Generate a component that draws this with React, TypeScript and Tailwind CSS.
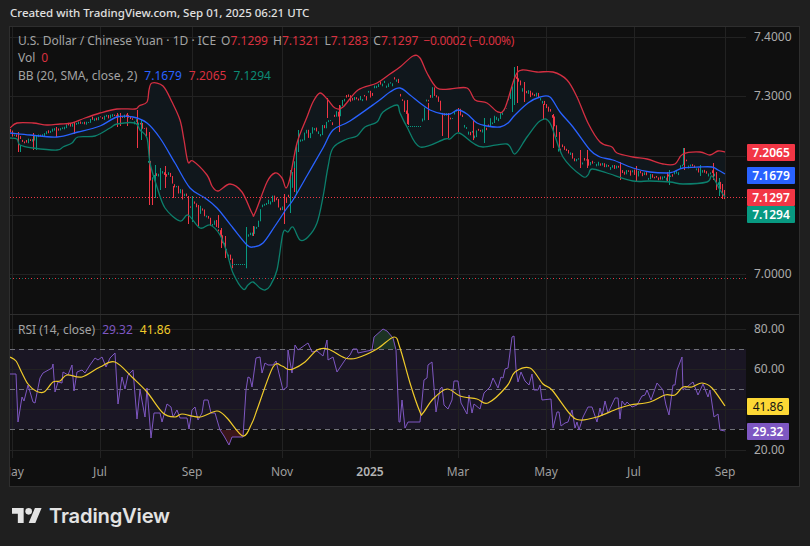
const UPPER = "10,128 17,123 33,123 47,125 60,124 72,123 85,118 100,113 117,109 135,109 139,106 147,102 149,90 152,83 163,86 172,102 180,120 184,140 188,162 193,161 207,175 212,186 218,191 230,184 242,192 252,213 255,213 267,182 275,173 282,178 286,188 290,178 297,143 307,117 313,102 320,93 328,100 335,108 343,107 358,90 377,83 390,74 400,67 413,56 420,58 427,73 437,88 450,89 467,88 475,100 487,103 498,112 505,108 515,77 522,70 537,72 553,72 567,80 577,97 588,123 600,142 612,147 617,153 633,157 647,159 663,164 675,164 683,154 700,152 710,155 718,151 725,152";
const MIDDLE = "10,133 30,135 57,137 78,132 100,126 117,117 133,117 147,123 160,138 175,163 190,188 205,198 217,208 233,228 247,245 253,247 263,243 275,226 287,208 293,200 308,174 323,148 333,130 350,121 377,102 390,92 400,88 410,95 420,103 430,110 443,114 450,114 458,110 467,114 477,123 487,126 500,127 508,123 515,115 528,103 540,97 550,97 560,112 573,127 590,150 600,157 613,160 633,168 650,172 667,173 673,172 683,168 700,167 712,167 718,170 725,174";
const LOWER = "10,138 17,139 20,145 33,148 57,150 63,147 72,143 78,137 95,136 110,128 117,124 135,123 140,130 147,138 150,163 157,187 165,208 180,221 188,215 200,228 210,225 220,235 227,253 233,273 243,289 248,285 253,282 260,288 265,290 270,286 277,270 283,233 288,232 293,227 300,240 308,237 317,223 323,197 328,167 333,148 347,139 357,136 365,127 377,122 383,112 397,105 400,113 407,127 420,147 445,139 450,139 459,133 473,143 483,147 507,144 515,154 527,137 540,121 550,123 563,157 582,176 588,175 592,169 607,173 633,181 650,181 670,182 683,184 707,182 712,176 720,190 725,197";
const RSI = "10,374 16,374 18,422 22,397 24,401 28,385 33,402 35,403 40,378 43,373 52,368 53,364 55,392 58,382 62,383 63,372 68,375 72,365 74,391 77,372 82,370 85,373 90,365 95,358 98,360 102,357 106,367 110,358 115,353 118,404 122,377 125,389 128,375 130,373 133,370 137,419 140,390 145,417 147,388 151,438 154,413 160,413 162,422 167,404 171,407 173,417 177,410 180,418 187,418 189,429 192,410 195,407 198,420 202,413 204,400 208,400 211,413 215,413 220,430 224,436 229,445 232,437 243,437 246,390 248,377 250,378 252,387 256,358 260,357 262,373 265,363 268,365 273,365 276,361 283,390 287,387 288,350 292,373 295,345 298,350 308,343 312,352 317,351 323,356 327,340 328,360 333,357 337,372 345,360 350,355 353,349 357,349 358,353 372,350 374,337 383,329 387,331 393,338 396,350 399,422 400,422 402,400 405,428 408,422 420,422 423,390 424,380 427,378 428,365 432,362 436,412 440,389 442,387 444,405 448,409 452,400 454,381 458,381 461,403 467,414 469,395 472,413 474,404 480,409 484,393 490,387 493,378 498,388 501,377 503,378 505,369 508,368 512,337 514,336 516,369 518,382 521,372 525,381 529,385 532,374 534,390 538,390 540,385 542,400 551,399 553,428 557,412 559,412 561,426 565,423 568,422 572,410 575,428 577,422 579,430 583,417 588,407 592,407 597,422 600,408 602,416 605,401 608,413 615,398 618,398 620,419 622,401 625,405 627,402 632,407 637,405 642,396 645,395 647,390 651,400 657,383 663,390 666,405 669,415 673,385 675,385 677,370 682,357 683,390 693,382 698,395 703,384 708,397 710,390 714,417 718,414 720,430 725,431";
const RSI_MA = "10,357 16,361 22,373 28,384 36,391 44,392 53,382 60,381 67,375 82,377 100,367 115,362 133,378 147,392 163,413 175,417 182,414 200,417 217,411 227,418 243,436 252,423 258,407 273,367 282,366 287,369 293,369 305,362 317,350 328,349 345,358 357,358 377,349 394,337 400,348 410,383 420,412 423,413 433,399 447,389 460,396 477,399 488,403 507,386 515,372 530,368 543,384 552,390 570,414 580,420 597,417 617,409 630,405 650,402 665,395 675,395 683,387 692,387 702,383 712,388 725,406";

// rough close path the bars follow
const CLOSES: [number, number][] = [[10,133],[18,138],[24,142],[35,137],[50,131],[60,128],[80,123],[100,118],[117,115],[128,118],[138,122],[146,135],[150,178],[156,172],[166,172],[174,188],[182,197],[192,206],[202,212],[214,224],[222,240],[228,258],[232,266],[245,264],[248,232],[256,226],[262,206],[272,198],[280,205],[287,200],[292,170],[297,140],[305,133],[320,130],[332,122],[342,104],[352,98],[366,97],[380,84],[395,78],[402,100],[408,125],[421,126],[426,100],[432,92],[440,105],[448,122],[458,112],[466,128],[476,133],[486,128],[496,118],[506,112],[511,88],[516,74],[524,90],[532,92],[540,98],[548,108],[553,122],[558,150],[566,152],[574,158],[584,162],[596,163],[610,166],[625,172],[640,174],[655,178],[668,176],[678,172],[684,160],[692,168],[702,173],[712,172],[717,182],[721,192],[725,198]];

const WICKS: [number, number, number, string][] = [
  [18,132,152,"#f23645"],[20,145,152,"#089981"],[33,133,150,"#f23645"],[36,136,150,"#089981"],[56,127,137,"#f23645"],[74,122,134,"#f23645"],
  [117,113,127,"#f23645"],[120,113,126,"#f23645"],[127,113,126,"#f23645"],[137,110,148,"#f23645"],[141,120,140,"#089981"],[149,132,205,"#f23645"],[152,180,205,"#f23645"],
  [155,165,198,"#089981"],[160,168,190,"#089981"],[165,166,188,"#f23645"],[173,186,198,"#f23645"],[188,196,224,"#f23645"],[192,196,222,"#089981"],[198,205,226,"#f23645"],
  [218,215,228,"#f23645"],[221,228,248,"#f23645"],[225,236,258,"#f23645"],[246,227,264,"#089981"],[253,226,236,"#f23645"],[284,194,224,"#f23645"],[290,170,213,"#089981"],
  [294,168,192,"#f23645"],[296,148,195,"#089981"],[298,130,152,"#089981"],[327,98,118,"#f23645"],[339,105,132,"#f23645"],[407,100,124,"#f23645"],[428,103,120,"#f23645"],
  [442,115,136,"#f23645"],[448,113,138,"#f23645"],[458,108,132,"#f23645"],[473,120,140,"#f23645"],[484,118,143,"#089981"],[514,67,105,"#089981"],[517,66,103,"#f23645"],
  [512,88,112,"#089981"],[524,82,102,"#f23645"],[543,104,120,"#f23645"],[553,114,148,"#f23645"],[559,132,150,"#f23645"],[580,150,168,"#f23645"],[587,150,168,"#f23645"],
  [620,162,180,"#f23645"],[636,166,181,"#f23645"],[669,170,185,"#089981"],[667,172,181,"#f23645"],[683,148,165,"#089981"],[684,148,170,"#f23645"],[700,165,176,"#089981"],
  [713,163,180,"#f23645"],[716,172,190,"#f23645"],[719,178,196,"#089981"],[722,184,199,"#f23645"],[724,190,199,"#f23645"],
];

function pathY(x: number) {
  for (let i = 1; i < CLOSES.length; i++) {
    const [x1, y1] = CLOSES[i];
    if (x <= x1) {
      const [x0, y0] = CLOSES[i - 1];
      return y0 + ((y1 - y0) * (x - x0)) / (x1 - x0);
    }
  }
  return 198;
}

// same bars on every load
function makeBars() {
  let seed = 41;
  const rnd = () => {
    seed = (seed * 16807) % 2147483647;
    return seed / 2147483647;
  };
  const bars: { x: number; o: number; c: number; hi: number; lo: number }[] = [];
  let prev = 133;
  for (let x = 10; x <= 724; x += 2) {
    if ((x > 232 && x < 245) || (x > 408 && x < 421)) continue;
    const amp = x < 140 ? 1.6 : x > 575 ? 2.6 : 5;
    const c = pathY(x) + (rnd() - 0.5) * amp * 2;
    // some days barely move, so they draw as short ticks
    const o = rnd() < 0.4 ? c + (rnd() < 0.6 ? 1.5 : -1.5) : prev;
    bars.push({ x, o, c, hi: Math.min(o, c) - rnd(), lo: Math.max(o, c) + rnd() });
    prev = c;
  }
  return bars;
}

function parsePoints(s: string) {
  return s.split(" ").map((p) => p.split(",").map(Number));
}

// catmull-rom through the points
function smooth(pts: number[][], move = true) {
  let d = (move ? "M" : "L") + pts[0][0] + " " + pts[0][1];
  for (let i = 0; i < pts.length - 1; i++) {
    const p0 = pts[i - 1] || pts[i];
    const p1 = pts[i];
    const p2 = pts[i + 1];
    const p3 = pts[i + 2] || p2;
    const c1x = p1[0] + (p2[0] - p0[0]) / 6;
    const c1y = p1[1] + (p2[1] - p0[1]) / 6;
    const c2x = p2[0] - (p3[0] - p1[0]) / 6;
    const c2y = p2[1] - (p3[1] - p1[1]) / 6;
    d += ` C${c1x.toFixed(1)} ${c1y.toFixed(1)} ${c2x.toFixed(1)} ${c2y.toFixed(1)} ${p2[0]} ${p2[1]}`;
  }
  return d;
}

const BARS = makeBars();
const UPPER_D = smooth(parsePoints(UPPER));
const LOWER_D = smooth(parsePoints(LOWER));
const MIDDLE_D = smooth(parsePoints(MIDDLE));
const MA_D = smooth(parsePoints(RSI_MA));
const BAND_D = UPPER_D + " " + smooth(parsePoints(LOWER).reverse(), false) + " Z";

const MAIN_GRID_Y = [37.5, 96.5, 156.5, 215.5, 274.5];
const RSI_GRID_Y = [329.5, 369.5, 409.5, 450.5];
const GRID_X = [12.5, 100.5, 192.5, 282.5, 370.5, 458.5, 546.5, 634.5, 725.5];

function GridLines({ ys, top, bottom }: { ys: number[]; top: number; bottom: number }) {
  return (
    <g stroke="#222222" strokeWidth="1">
      {ys.map((y) => (
        <line key={y} x1="10" x2="746" y1={y} y2={y} />
      ))}
      {GRID_X.map((x) => (
        <line key={x} x1={x} x2={x} y1={top} y2={bottom} />
      ))}
    </g>
  );
}

function MainChart() {
  return (
    <svg className="block w-[736px] h-[287px]" viewBox="10 27 736 287">
      <GridLines ys={MAIN_GRID_Y} top={27} bottom={314} />
      <path d={BAND_D} fill="#10171c" />
      <g stroke="#222222" strokeWidth="1" opacity="0.5">
        <line x1="10" x2="746" y1="156.5" y2="156.5" />
        <line x1="10" x2="746" y1="215.5" y2="215.5" />
      </g>
      <line x1="10" x2="746" y1="197.5" y2="197.5" stroke="#f23645" strokeDasharray="1 2" />
      <line x1="10" x2="746" y1="278.5" y2="278.5" stroke="#089981" strokeDasharray="1 5" opacity="0.7" />
      <line x1="13" x2="746" y1="278.5" y2="278.5" stroke="#f23645" strokeDasharray="1 5" />
      {BARS.map((b) => (
        <line key={b.x} x1={b.x + 0.5} x2={b.x + 0.5} y1={b.hi} y2={b.lo} stroke={b.c < b.o ? "#089981" : "#f23645"} />
      ))}
      {WICKS.map(([x, y1, y2, color], i) => (
        <line key={i} x1={x + 0.5} x2={x + 0.5} y1={y1} y2={y2} stroke={color} />
      ))}
      <line x1="232" x2="245" y1="264.5" y2="264.5" stroke="#089981" strokeDasharray="1 1" />
      <line x1="408" x2="421" y1="126.5" y2="126.5" stroke="#089981" strokeDasharray="1 1" />
      <g fill="none" strokeWidth="1.3" strokeLinejoin="round">
        <path d={UPPER_D} stroke="#d42f42" />
        <path d={LOWER_D} stroke="#0c7f6c" />
        <path d={MIDDLE_D} stroke="#2962ff" />
      </g>
    </svg>
  );
}

function RsiChart() {
  return (
    <svg className="block w-[736px] h-[143px]" viewBox="10 315 736 143">
      <rect x="10" y="349" width="736" height="80" fill="#1a1624" />
      <GridLines ys={RSI_GRID_Y} top={315} bottom={458} />
      <polygon points="374,349 374,337 383,329 387,331 393,338 396,349" fill="#1c3324" />
      <polygon points="220,430 224,436 229,445 232,437 243,437 243,430" fill="#3a1519" />
      <g stroke="#6f7078" strokeDasharray="5 4">
        <line x1="10" x2="746" y1="349.5" y2="349.5" />
        <line x1="10" x2="746" y1="389.5" y2="389.5" />
        <line x1="10" x2="746" y1="429.5" y2="429.5" />
      </g>
      <polyline points={RSI} fill="none" stroke="#7e57c2" strokeWidth="1" strokeLinejoin="round" />
      <path d={MA_D} fill="none" stroke="#f0cb2a" strokeWidth="1.2" strokeLinejoin="round" />
    </svg>
  );
}

function PriceTag({ className, text }: { className: string; text: string }) {
  return (
    <div className={"absolute left-[1px] h-[17px] flex items-center justify-center rounded-[1px] text-white text-[12px] font-semibold " + className}>
      {text}
    </div>
  );
}

function Tick({ className, text }: { className: string; text: string }) {
  return <div className={"absolute left-[8px] leading-[14px] text-[#ababab] text-[12px] " + className}>{text}</div>;
}

function TimeLabel({ className, text, bold }: { className: string; text: string; bold?: boolean }) {
  return (
    <div className={"absolute top-[6px] -translate-x-1/2 leading-[16px] text-[12px] " + (bold ? "font-semibold text-[#b4b4b4] " : "text-[#9e9e9e] ") + className}>
      {text}
    </div>
  );
}

export default function App() {
  return (
    <div className="w-[810px] h-[546px] flex flex-col overflow-hidden bg-[#1f1f1f] font-['Noto_Sans',sans-serif]">
      <div className="h-[26px] pl-[10px] flex items-center text-[11.5px] font-medium text-[#e0e0e0]">
        Created with TradingView.com, Sep 01, 2025 06:21 UTC
      </div>

      <div className="w-[791px] h-[461px] ml-[9px] flex flex-col border border-[#2e2e2e] bg-[#0f0f0f]">
        <div className="h-[287px] flex">
          <div className="relative w-[736px]">
            <MainChart />
            <div className="absolute left-[8px] top-[5px] text-[12px] leading-[17.3px] text-[#a3a3a3]">
              <div className="flex gap-[5px]">
                <span>U.S. Dollar / Chinese Yuan · 1D · ICE</span>
                <span>O<span className="text-[#d9303f]">7.1299</span></span>
                <span>H<span className="text-[#d9303f]">7.1321</span></span>
                <span>L<span className="text-[#d9303f]">7.1283</span></span>
                <span>C<span className="text-[#d9303f]">7.1297</span></span>
                <span className="text-[#d9303f] tracking-[-0.3px]">−0.0002 (−0.00%)</span>
              </div>
              <div className="flex gap-[6px]">
                <span>Vol</span>
                <span className="text-[#d9303f]">0</span>
              </div>
              <div className="flex gap-[7px]">
                <span>BB (20, SMA, close, 2)</span>
                <span className="text-[#2962ff]">7.1679</span>
                <span className="text-[#d9303f]">7.2065</span>
                <span className="text-[#0c8a75]">7.1294</span>
              </div>
            </div>
          </div>
          <div className="relative flex-1">
            <Tick className="top-[3px]" text="7.4000" />
            <Tick className="top-[62px]" text="7.3000" />
            <Tick className="top-[240px]" text="7.0000" />
            <PriceTag className="top-[117px] w-[48px] bg-[#f23645]" text="7.2065" />
            <PriceTag className="top-[140px] w-[48px] bg-[#2962ff]" text="7.1679" />
            <PriceTag className="top-[162px] w-[48px] bg-[#f23645]" text="7.1297" />
            <PriceTag className="top-[179px] w-[48px] bg-[#089981]" text="7.1294" />
          </div>
        </div>

        <div className="h-[1px] bg-[#2e2e2e]" />

        <div className="h-[143px] flex">
          <div className="relative w-[736px]">
            <RsiChart />
            <div className="absolute left-[8px] top-[6px] flex gap-[7px] text-[12px] leading-[17px] text-[#a3a3a3]">
              <span>RSI (14, close)</span>
              <span className="text-[#7e57c2]">29.32</span>
              <span className="text-[#f0cb2a]">41.86</span>
            </div>
          </div>
          <div className="relative flex-1">
            <Tick className="top-[7px]" text="80.00" />
            <Tick className="top-[47px]" text="60.00" />
            <Tick className="top-[128px]" text="20.00" />
            <PriceTag className="top-[83px] w-[42px] bg-[#fdd835] !text-[#131313] !font-normal" text="41.86" />
            <PriceTag className="top-[108px] w-[42px] bg-[#7e57c2]" text="29.32" />
          </div>
        </div>

        <div className="relative flex-1 overflow-hidden">
          <TimeLabel className="left-[2px]" text="May" />
          <TimeLabel className="left-[90px]" text="Jul" />
          <TimeLabel className="left-[182px]" text="Sep" />
          <TimeLabel className="left-[272px]" text="Nov" />
          <TimeLabel className="left-[360px]" text="2025" bold />
          <TimeLabel className="left-[448px]" text="Mar" />
          <TimeLabel className="left-[536px]" text="May" />
          <TimeLabel className="left-[624px]" text="Jul" />
          <TimeLabel className="left-[715px]" text="Sep" />
        </div>
      </div>

      <div className="flex-1 pl-[12px] pt-[20px] flex items-start gap-[7px] text-[#e3e3e3]">
        <svg className="w-[30px] h-[15px] mt-[1px]" viewBox="0 4 36 18" fill="currentColor">
          <path d="M14 22H7V11H0V4h14v18zM28 22h-8l7.5-18h8L28 22z" />
          <circle cx="20" cy="8" r="4" />
        </svg>
        <span className="font-['Inter',sans-serif] font-semibold text-[20.2px] leading-[18px] tracking-[-0.2px]">TradingView</span>
      </div>
    </div>
  );
}
